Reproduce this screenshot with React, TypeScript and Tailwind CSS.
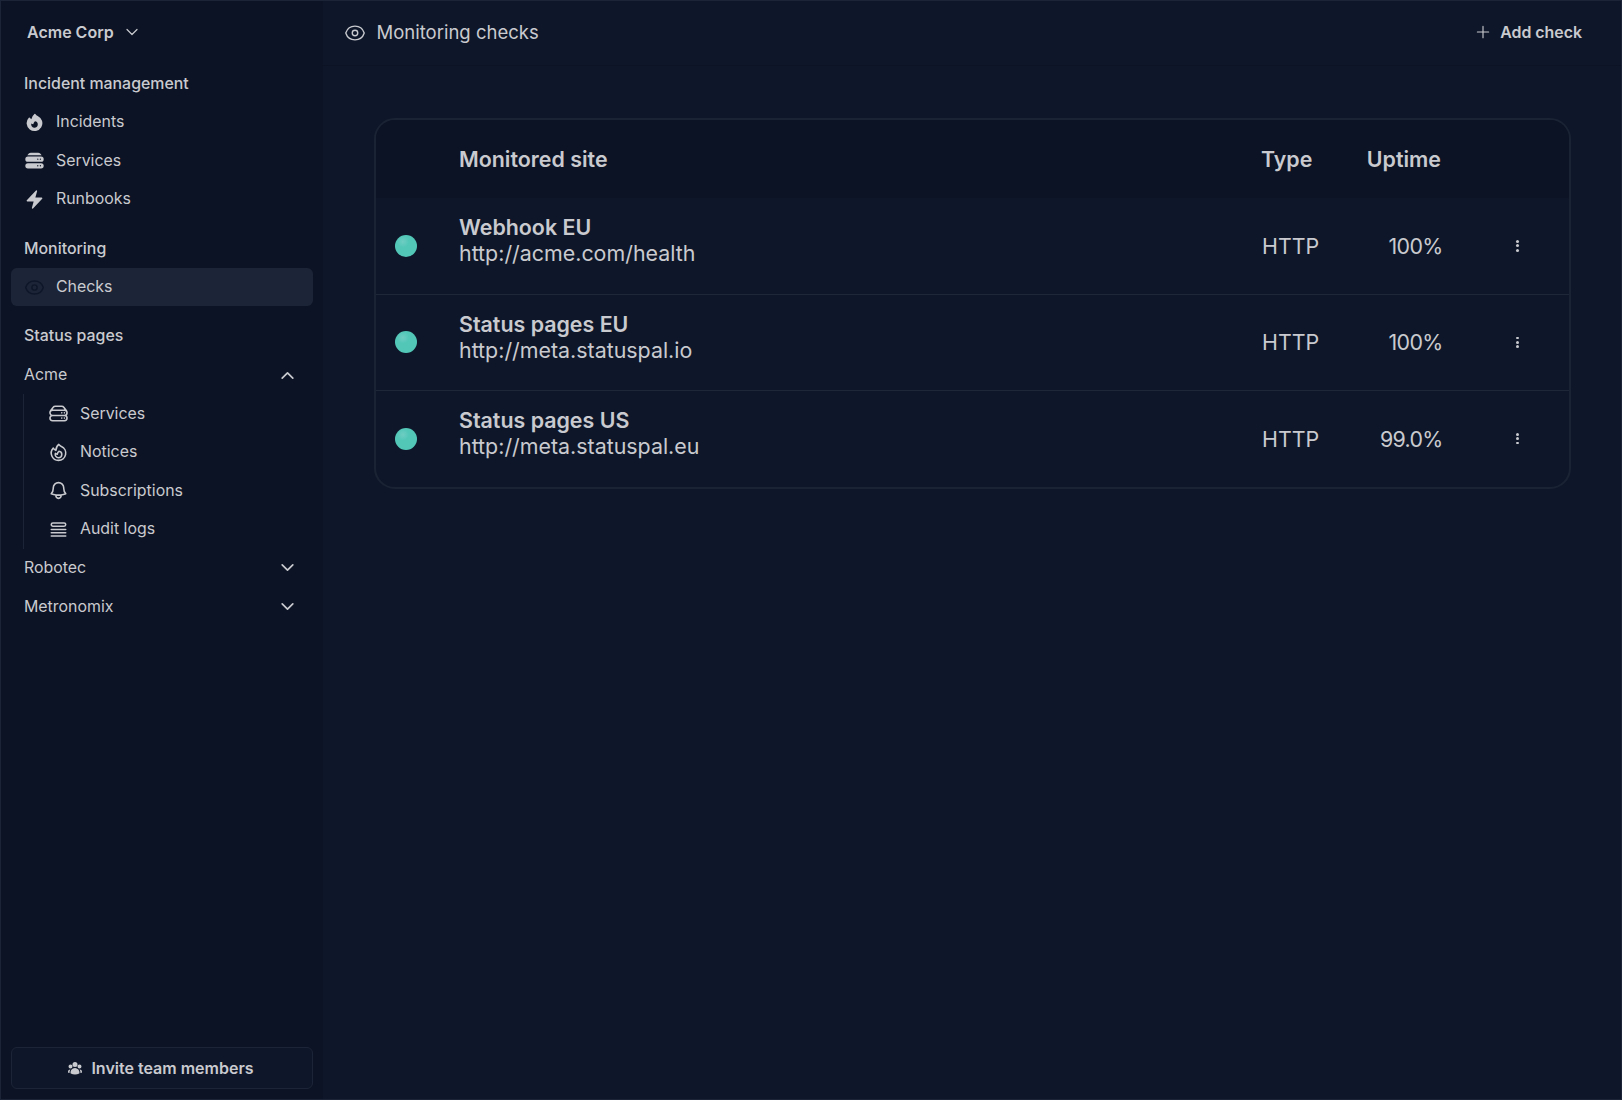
import type { ComponentType } from "react"
import {
  HiBolt,
  HiFire,
  HiOutlineBell,
  HiOutlineChevronDown,
  HiOutlineChevronUp,
  HiOutlineEye,
  HiOutlineFire,
  HiOutlinePlus,
  HiOutlineQueueList,
  HiOutlineServerStack,
  HiServerStack,
  HiUserGroup,
} from "react-icons/hi2"

type Icon = ComponentType<{ className?: string }>

const management: { name: string; icon: Icon }[] = [
  { name: "Incidents", icon: HiFire },
  { name: "Services", icon: HiServerStack },
  { name: "Runbooks", icon: HiBolt },
]

const acmeLinks: { name: string; icon: Icon }[] = [
  { name: "Services", icon: HiOutlineServerStack },
  { name: "Notices", icon: HiOutlineFire },
  { name: "Subscriptions", icon: HiOutlineBell },
  { name: "Audit logs", icon: HiOutlineQueueList },
]

const checks = [
  { name: "Webhook EU", url: "http://acme.com/health", type: "HTTP", uptime: "100%" },
  { name: "Status pages EU", url: "http://meta.statuspal.io", type: "HTTP", uptime: "100%" },
  { name: "Status pages US", url: "http://meta.statuspal.eu", type: "HTTP", uptime: "99.0%" },
]

function SectionTitle({ children }: { children: string }) {
  return <h2 className="flex h-[38.6px] items-center px-[13px] font-medium">{children}</h2>
}

function NavItem({ name, icon: Icon, active }: { name: string; icon: Icon; active?: boolean }) {
  return (
    <a
      className={
        active
          ? "flex h-[38.6px] items-center gap-3 rounded-md bg-[#1c2537] px-[13px]"
          : "flex h-[38.6px] items-center gap-3 px-[13px]"
      }
    >
      <Icon className={active ? "-mr-px size-[21px] stroke-[1.7] text-[#0e1729]" : "-mr-px size-[21px]"} />
      {name}
    </a>
  )
}

function PageToggle({ name, open }: { name: string; open?: boolean }) {
  const Chevron = open ? HiOutlineChevronUp : HiOutlineChevronDown
  return (
    <button className="flex h-[38.6px] w-full items-center justify-between pr-[17px] pl-[13px]">
      {name}
      <Chevron className="size-[17px] stroke-[2.4]" />
    </button>
  )
}

function Sidebar() {
  return (
    <aside className="flex w-[322px] flex-col bg-[#0c1324] px-[10px] text-[15.9px]">
      <button className="flex h-[63.2px] items-center gap-[10px] pb-[2px] pl-4 text-base font-semibold">
        Acme Corp
        <HiOutlineChevronDown className="size-4 stroke-[1.8]" />
      </button>
      <nav className="flex flex-1 flex-col gap-[10.7px]">
        <div>
          <SectionTitle>Incident management</SectionTitle>
          {management.map((item) => (
            <NavItem key={item.name} {...item} />
          ))}
        </div>
        <div>
          <SectionTitle>Monitoring</SectionTitle>
          <NavItem name="Checks" icon={HiOutlineEye} active />
        </div>
        <div>
          <SectionTitle>Status pages</SectionTitle>
          <PageToggle name="Acme" open />
          <div className="ml-3 border-l border-[#1c2537] pl-[11px] [&_svg]:stroke-[1.8]">
            {acmeLinks.map((item) => (
              <NavItem key={item.name} {...item} />
            ))}
          </div>
          <PageToggle name="Robotec" />
          <PageToggle name="Metronomix" />
        </div>
      </nav>
      <button className="mb-[10px] flex h-[42px] items-center justify-center gap-2 rounded-md border border-[#1c2537] bg-[#0e1729] pr-[3px] text-base font-semibold">
        <HiUserGroup className="size-4" />
        Invite team members
      </button>
    </aside>
  )
}

function ChecksTable() {
  return (
    <div className="mt-[52px] mr-[50px] ml-[51px] overflow-hidden rounded-[21px] border-2 border-[#1a2334] text-[21.4px]">
      <table className="w-full table-fixed">
        <thead className="bg-[#0c1324]">
          <tr className="h-[78px] text-left">
            <th className="w-[83px]" />
            <th className="font-semibold">Monitored site</th>
            <th className="w-[105px] font-semibold">Type</th>
            <th className="w-[75px] text-right font-semibold">Uptime</th>
            <th className="w-[128px]" />
          </tr>
        </thead>
        <tbody>
          {checks.map((check) => (
            <tr key={check.name} className="h-[96.2px] border-b border-[#1e2738] last:border-b-0">
              <td className="pl-[19px]">
                <div className="size-[22px] rounded-full bg-[radial-gradient(circle_at_36%_30%,#6fcdc3,#52c7b8_28%)]" />
              </td>
              <td className="pb-[11px] leading-[26px]">
                <div className="font-semibold">{check.name}</div>
                <div>{check.url}</div>
              </td>
              <td className="pl-px">{check.type}</td>
              <td className="text-right tracking-[-0.7px]">
                <span className="-mr-[1.5px]">{check.uptime}</span>
              </td>
              <td>
                <div className="ml-[75px] flex w-[3px] flex-col gap-[1.5px]">
                  <span className="size-[2.8px] rounded-full bg-current" />
                  <span className="size-[2.8px] rounded-full bg-current" />
                  <span className="size-[2.8px] rounded-full bg-current" />
                </div>
              </td>
            </tr>
          ))}
        </tbody>
      </table>
    </div>
  )
}

export default function App() {
  return (
    <div className="flex h-[1100px] w-[1622px] overflow-hidden border border-[#1c2537] bg-[#0e1729] font-['Inter',sans-serif] text-[#c9cacf]">
      <Sidebar />
      <main className="flex flex-1 flex-col">
        <header className="flex h-[65px] items-center justify-between border-b border-[#0c1324] pr-[39px] pb-px pl-[21px]">
          <h1 className="flex items-center gap-[10.5px] text-[18.5px]">
            <HiOutlineEye className="size-[22px]" />
            Monitoring checks
          </h1>
          <button className="flex items-center gap-[8px] text-[15.9px] font-semibold">
            <HiOutlinePlus className="size-[18px]" />
            Add check
          </button>
        </header>
        <ChecksTable />
      </main>
    </div>
  )
}
